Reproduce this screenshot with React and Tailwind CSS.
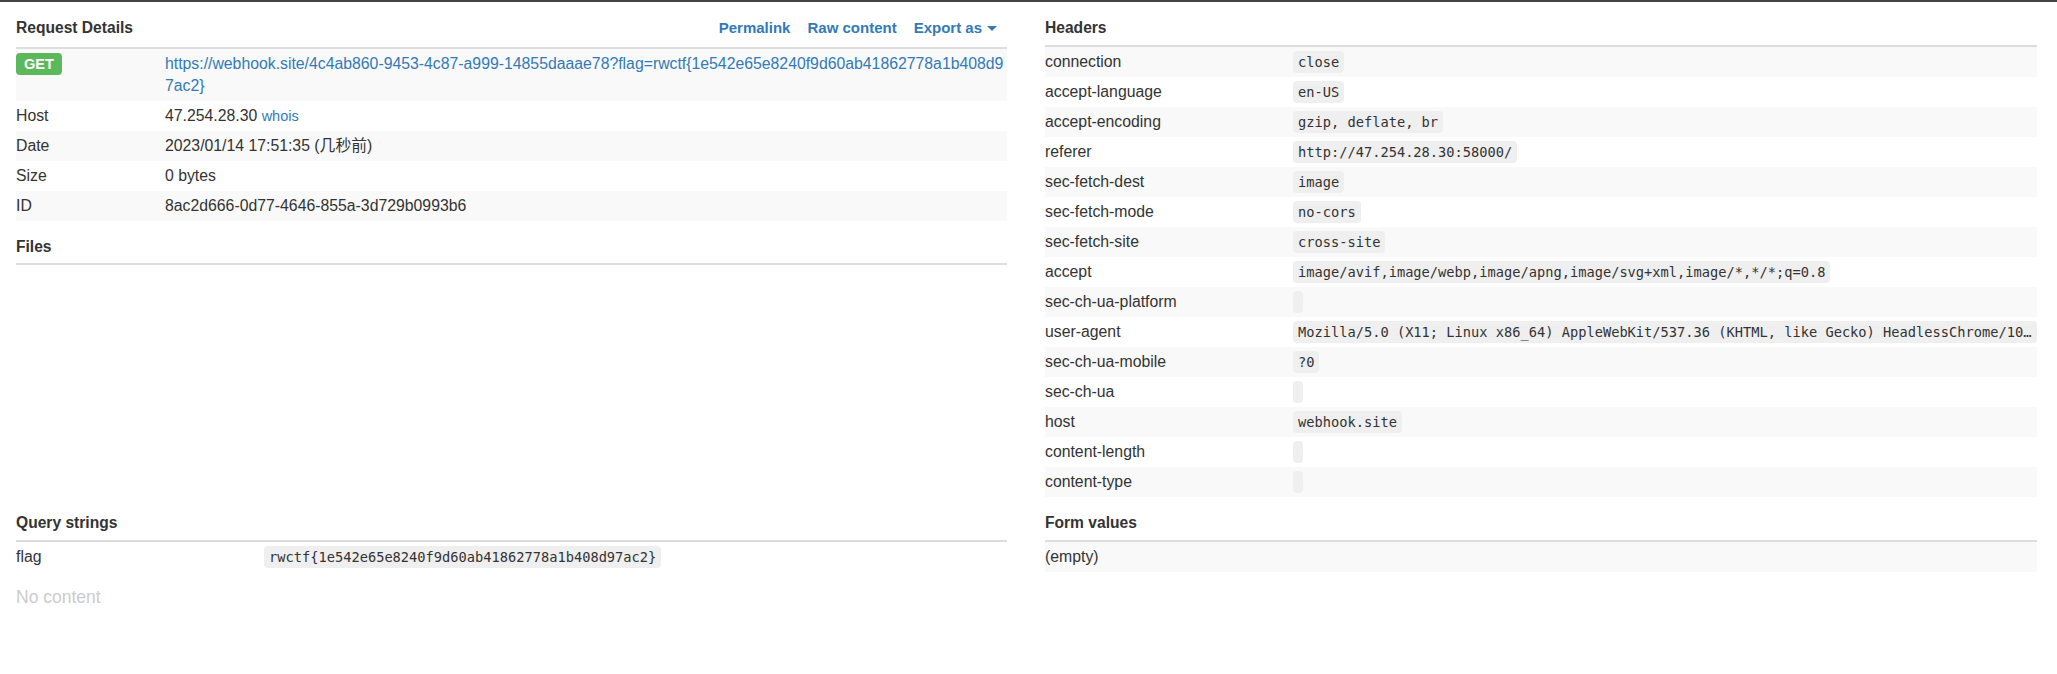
import React from "react";

const sans = "font-['Liberation_Sans',Arial,'Noto_Sans_CJK_SC',sans-serif]";
const mono = "font-['DejaVu_Sans_Mono','Liberation_Mono',monospace]";

function Pill({ children }) {
  return (
    <span
      className={`${mono} inline-block max-w-full overflow-hidden text-ellipsis whitespace-nowrap align-top rounded-[4px] bg-[#efefef] px-[5px] text-[13.7px] leading-[22px] text-[#333] min-h-[22px]`}
    >
      {children}
    </span>
  );
}

function Heading({ children, right, pb = "pb-[6px]" }) {
  return (
    <div className={`flex items-baseline justify-between pt-[15px] ${pb} border-b-2 border-[#dddddd]`}>
      <div className="text-[15.6px] font-bold leading-[22px] text-[#333]">{children}</div>
      {right}
    </div>
  );
}

const headers = [
  ["connection", "close"],
  ["accept-language", "en-US"],
  ["accept-encoding", "gzip, deflate, br"],
  ["referer", "http://47.254.28.30:58000/"],
  ["sec-fetch-dest", "image"],
  ["sec-fetch-mode", "no-cors"],
  ["sec-fetch-site", "cross-site"],
  ["accept", "image/avif,image/webp,image/apng,image/svg+xml,image/*,*/*;q=0.8"],
  ["sec-ch-ua-platform", ""],
  [
    "user-agent",
    "Mozilla/5.0 (X11; Linux x86_64) AppleWebKit/537.36 (KHTML, like Gecko) HeadlessChrome/109.0.5414.74 Safari/537.36",
  ],
  ["sec-ch-ua-mobile", "?0"],
  ["sec-ch-ua", ""],
  ["host", "webhook.site"],
  ["content-length", ""],
  ["content-type", ""],
];

export default function App() {
  const url =
    "https://webhook.site/4c4ab860-9453-4c87-a999-14855daaae78?flag=rwctf{1e542e65e8240f9d60ab41862778a1b408d97ac2}";
  return (
    <div className={`${sans} min-h-[674px] w-full bg-white border-t-2 border-[#444] text-[15.8px] leading-[22px] text-[#333]`}>
      <div className="grid grid-cols-[991px_992px] gap-x-[38px] pl-[16px]">
        {/* Left top */}
        <div>
          <Heading
            pb="pb-[8px]"
            right={
              <div className="flex items-baseline gap-[17px] pr-[10px] text-[15px] font-bold text-[#337ab7]">
                <span>Permalink</span>
                <span>Raw content</span>
                <span className="flex items-center">
                  Export as
                  <span className="ml-[5px] inline-block h-0 w-0 border-x-[5px] border-t-[5px] border-x-transparent border-t-[#337ab7]" />
                </span>
              </div>
            }
          >
            Request Details
          </Heading>
          <div>
            <div className="flex bg-[#f9f9f9] py-[4px]">
              <div className="w-[149px] shrink-0">
                <span className="inline-block rounded-[4px] bg-[#5cb85c] px-[8px] text-[14.6px] font-bold leading-[22px] text-white">
                  GET
                </span>
              </div>
              <div className="min-w-0 flex-1 break-all text-[#337ab7]">{url}</div>
            </div>
            <div className="flex py-[4px]">
              <div className="w-[149px] shrink-0">Host</div>
              <div>
                47.254.28.30 <span className="text-[14.5px] text-[#337ab7]">whois</span>
              </div>
            </div>
            <div className="flex bg-[#f9f9f9] py-[4px]">
              <div className="w-[149px] shrink-0">Date</div>
              <div>2023/01/14 17:51:35 (几秒前)</div>
            </div>
            <div className="flex py-[4px]">
              <div className="w-[149px] shrink-0">Size</div>
              <div>0 bytes</div>
            </div>
            <div className="flex bg-[#f9f9f9] py-[4px]">
              <div className="w-[149px] shrink-0">ID</div>
              <div>8ac2d666-0d77-4646-855a-3d729b0993b6</div>
            </div>
          </div>
          <Heading pb="pb-[5px]">Files</Heading>
        </div>

        {/* Right top */}
        <div className="min-w-0">
          <Heading>Headers</Heading>
          <div>
            {headers.map(([k, v], i) => (
              <div key={k} className={`flex py-[4px] ${i % 2 === 0 ? "bg-[#f9f9f9]" : ""}`}>
                <div className="w-[248px] shrink-0">{k}</div>
                <div className="min-w-0 flex-1 overflow-hidden">
                  <Pill>{v}</Pill>
                </div>
              </div>
            ))}
          </div>
        </div>

        {/* Left bottom */}
        <div>
          <Heading>Query strings</Heading>
          <div className="flex py-[4px]">
            <div className="w-[248px] shrink-0">flag</div>
            <div className="min-w-0 flex-1">
              <Pill>rwctf{"{"}1e542e65e8240f9d60ab41862778a1b408d97ac2{"}"}</Pill>
            </div>
          </div>
          <div className="mt-[13px] text-[17.5px] leading-[25px] text-[#cccccc]">No content</div>
        </div>

        {/* Right bottom */}
        <div>
          <Heading>Form values</Heading>
          <div className="bg-[#f9f9f9] py-[4px]">(empty)</div>
        </div>
      </div>
    </div>
  );
}
